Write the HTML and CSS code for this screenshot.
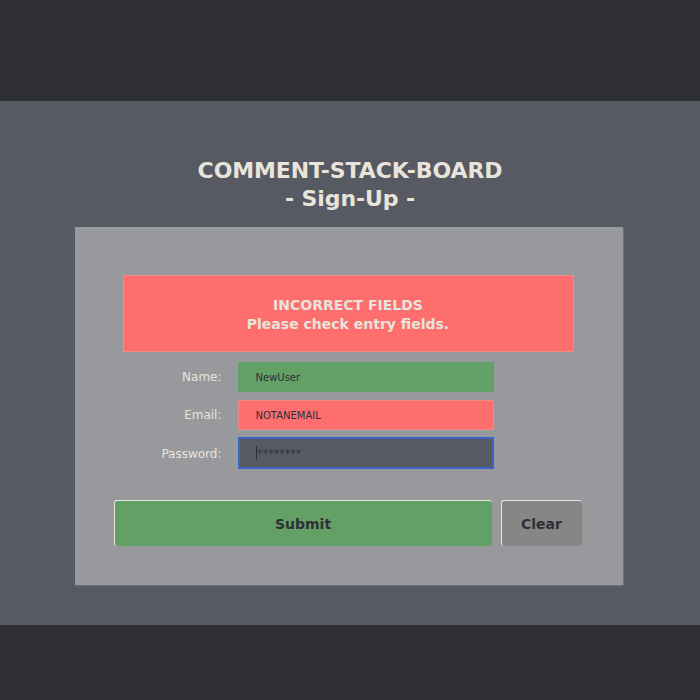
FILE: index.html
```html
<!DOCTYPE html>
<html>
<head>
<meta charset="utf-8">
<link rel="stylesheet" href="styles.css">
</head>
<body>
<div class="band top"></div>
<main class="stage">
  <h1 class="title">COMMENT-STACK-BOARD<br>- Sign-Up -</h1>
  <section class="card">
    <div class="alert">INCORRECT FIELDS<br>Please check entry fields.</div>
    <div class="form">
      <label class="lbl">Name:</label>
      <div class="field ok">NewUser</div>
      <label class="lbl">Email:</label>
      <div class="field bad">NOTANEMAIL</div>
      <label class="lbl">Password:</label>
      <div class="field focus"><span class="caret"></span>********</div>
    </div>
    <div class="actions">
      <button class="btn submit">Submit</button>
      <button class="btn clear">Clear</button>
    </div>
  </section>
</main>
<div class="band bottom"></div>
</body>
</html>
```
FILE: styles.css
```css
html, body {
  margin: 0;
  padding: 0;
  width: 700px;
  height: 700px;
  overflow: hidden;
  font-family: "DejaVu Sans", sans-serif;
  background: #2e2f34;
}
.band.top { height: 101px; background: #2e2f34; }
.band.bottom { height: 75px; background: #2e2f34; }
.stage {
  height: 524px;
  background: #575a62;
  display: flex;
  flex-direction: column;
  align-items: center;
  box-sizing: border-box;
  padding-top: 56px;
}
.title {
  margin: 0;
  color: #e8e4dc;
  font-size: 22px;
  font-weight: bold;
  line-height: 28px;
  text-align: center;
  height: 70px;
  letter-spacing: -0.1px;
}
.card {
  width: 548px;
  height: 358px;
  background: #98999d;
  box-shadow: 1px 1px 0 #6e7076;
  box-sizing: border-box;
  padding: 48px 48px 0 48px;
  margin-left: -3px;
  display: flex;
  flex-direction: column;
}
.alert {
  background: #ff6e6e;
  border: 1px solid #f08c86;
  height: 77px;
  box-sizing: border-box;
  width: 451px;
  display: flex;
  align-items: center;
  justify-content: center;
  text-align: center;
  color: #e8e4dc;
  font-weight: bold;
  font-size: 14px;
  line-height: 19px;
  padding-top: 2px;
}
.form {
  display: grid;
  grid-template-columns: 99px 256px;
  column-gap: 16px;
  row-gap: 8px;
  margin-top: 10px;
  align-items: center;
}
.lbl {
  text-align: right;
  color: #e8e4dc;
  font-size: 12px;
}
.field {
  height: 30px;
  box-sizing: border-box;
  padding-left: 18px;
  font-size: 10px;
  color: #2e2f34;
  display: flex;
  align-items: center;
}
.field.ok { background: #63a066; }
.field.bad { background: #ff6e6e; border: 1px solid #f08c86; padding-left: 17px; }
.field.focus {
  height: 32px;
  background: #575a62;
  border: 2px solid #3a64c8;
  padding-left: 16px;
  letter-spacing: 0.5px;
  margin-top: -1px;
}
.caret {
  display: inline-block;
  width: 1px;
  height: 14px;
  background: #2e2f34;
  margin-right: 1px;
}
.actions {
  display: flex;
  gap: 9px;
  margin-top: 31px;
  margin-left: -9px;
}
.btn {
  flex-shrink: 0;
  height: 46px;
  border: 0;
  border-top: 1px solid #e8e4dc;
  border-left: 1px solid #e8e4dc;
  border-radius: 3px;
  font-family: "DejaVu Sans", sans-serif;
  font-weight: bold;
  font-size: 14px;
  color: #2e2f34;
  padding: 0;
}
.submit { width: 378px; background: #63a066; }
.clear { width: 81px; background: #868686; }
```
